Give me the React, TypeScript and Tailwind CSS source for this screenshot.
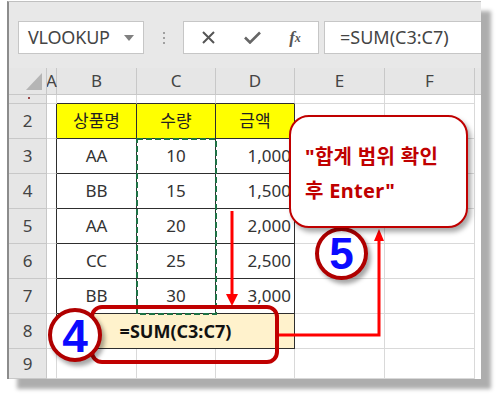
import React from 'react';

const font = "font-['Noto_Sans','Noto_Sans_CJK_KR',sans-serif]";

// widths of the sheet columns (row header, A..F, filler)
const COLS = [
  { key: 'A', w: 'w-[10px]' },
  { key: 'B', w: 'w-[80px]' },
  { key: 'C', w: 'w-[79px]' },
  { key: 'D', w: 'w-[79px]' },
  { key: 'E', w: 'w-[90px]' },
  { key: 'F', w: 'w-[90px]' },
];

const DATA = [
  ['AA', '10', '1,000'],
  ['BB', '15', '1,500'],
  ['AA', '20', '2,000'],
  ['CC', '25', '2,500'],
  ['BB', '30', '3,000'],
];

const RowHead: React.FC<{ label?: React.ReactNode; h: string }> = ({ label, h }) => (
  <div className={`w-[38px] ${h} shrink-0 bg-[#e6e6e6] border-r border-b border-[#c8c8c8] flex items-center justify-center text-[17px] text-[#444] overflow-hidden`}>
    {label}
  </div>
);

const Filler: React.FC<{ h: string }> = ({ h }) => <div className={`flex-1 ${h} bg-white`} />;

const Grid = 'border-r border-b border-[#d9d9d9]';
const Dark = 'border-r border-b border-[#2e2e2e]';

const FormulaBar = () => (
  <div className="h-[66px] bg-[#e8e8e8] flex items-start pt-[19px] pl-[9px]">
    <div className="w-[126px] h-[33px] bg-white border border-[#c6c6c6] flex items-center pl-[9px] pr-[9px] justify-between">
      <span className="text-[18px] text-[#444] tracking-[-0.2px]">VLOOKUP</span>
      <svg width="10" height="6" viewBox="0 0 10 6"><path d="M0 0h10L5 6z" fill="#808080" /></svg>
    </div>
    <div className="w-[39px] h-[33px] flex flex-col items-center justify-center gap-[3px]">
      <div className="w-[2px] h-[2px] bg-[#a0a0a0]" />
      <div className="w-[2px] h-[2px] bg-[#a0a0a0]" />
      <div className="w-[2px] h-[2px] bg-[#a0a0a0]" />
    </div>
    <div className="w-[136px] h-[33px] bg-white border border-[#c6c6c6] flex items-center">
      <div className="w-[48px] flex justify-center">
        <svg width="13" height="13" viewBox="0 0 13 13"><path d="M1 1l11 11M12 1L1 12" stroke="#555" strokeWidth="2" /></svg>
      </div>
      <div className="w-[40px] flex justify-center">
        <svg width="17" height="13" viewBox="0 0 17 13"><path d="M1 6.5l5 5L16 1.5" stroke="#666" strokeWidth="2.6" fill="none" /></svg>
      </div>
      <div className="w-[46px] flex justify-center font-['Liberation_Serif',serif] italic font-bold text-[#555] text-[17px]">
        f<span className="text-[12px] mt-[4px]">x</span>
      </div>
    </div>
    <div className="ml-[5px] flex-1 h-[33px] bg-white border border-[#c6c6c6] border-r-0 flex items-center pl-[15px]">
      <span className="text-[18px] text-[#444]">=SUM(C3:C7)</span>
    </div>
  </div>
);

const HeaderRow = () => (
  <div className="flex h-[27px]">
    <div className="w-[38px] h-[27px] bg-[#e6e6e6] border-r border-b border-[#c8c8c8] relative">
      <svg className="absolute left-[17px] top-[5px]" width="16" height="17" viewBox="0 0 16 17">
        <path d="M16 0V17H0z" fill="#b5b5b5" />
      </svg>
    </div>
    {COLS.map((c) => (
      <div key={c.key} className={`${c.w} h-[27px] shrink-0 bg-[#e6e6e6] border-r border-b border-[#c8c8c8] flex items-center justify-center text-[17px] text-[#444] overflow-visible`}>
        {c.key}
      </div>
    ))}
    <div className="flex-1 h-[27px] bg-[#e6e6e6] border-b border-[#c8c8c8]" />
  </div>
);

export default function App() {
  return (
    <div className={`relative w-[500px] h-[398px] bg-white overflow-hidden ${font}`}>
      {/* window frame */}
      <div className="ml-[7px] mt-[1px] w-[474px] border-l-2 border-t border-[#8c8c8c] border-t-[#c0c0c0] shadow-[10px_10px_4px_rgba(0,0,0,0.32)]">
        <FormulaBar />
        <HeaderRow />

        {/* row 1 */}
        <div className="flex h-[9px]">
          <div className="w-[38px] h-[9px] bg-[#e6e6e6] border-r border-b border-[#c8c8c8] relative">
            <div className="absolute left-[19px] top-[2px] w-[2px] h-[2px] bg-[#9a4a4a]" />
          </div>
          <div className={`w-[10px] h-[9px] ${Grid}`} />
          <div className={`w-[80px] h-[9px] border-r border-[#d9d9d9] border-b border-b-[#2e2e2e]`} />
          <div className={`w-[79px] h-[9px] border-r border-[#d9d9d9] border-b border-b-[#2e2e2e]`} />
          <div className={`w-[79px] h-[9px] border-r border-[#d9d9d9] border-b border-b-[#2e2e2e]`} />
          <div className={`w-[90px] h-[9px] ${Grid}`} />
          <div className={`w-[90px] h-[9px] ${Grid}`} />
          <Filler h="h-[9px]" />
        </div>

        {/* row 2 : header */}
        <div className="flex h-[35px]">
          <RowHead label="2" h="h-[35px]" />
          <div className="w-[10px] h-[35px] border-r border-r-[#2e2e2e] border-b border-b-[#d9d9d9]" />
          {['상품명', '수량', '금액'].map((t, i) => (
            <div key={t} className={`${i === 0 ? 'w-[80px]' : 'w-[79px]'} h-[35px] bg-[#ffff00] ${Dark} flex items-center justify-center text-[17px] text-[#222]`}>
              {t}
            </div>
          ))}
          <div className={`w-[90px] h-[35px] ${Grid}`} />
          <div className={`w-[90px] h-[35px] ${Grid}`} />
          <Filler h="h-[35px]" />
        </div>

        {/* rows 3-7 */}
        {DATA.map((r, idx) => (
          <div key={idx} className="flex h-[35px]">
            <RowHead label={String(idx + 3)} h="h-[35px]" />
            <div className="w-[10px] h-[35px] border-r border-r-[#2e2e2e] border-b border-b-[#d9d9d9]" />
            <div className={`w-[80px] h-[35px] ${Dark} flex items-center justify-center text-[17px] text-[#333]`}>{r[0]}</div>
            <div className={`w-[79px] h-[35px] ${Dark} flex items-center justify-center text-[17px] text-[#333]`}>{r[1]}</div>
            <div className={`w-[79px] h-[35px] ${Dark} flex items-center justify-end pr-[3px] text-[17px] text-[#333]`}>{r[2]}</div>
            <div className={`w-[90px] h-[35px] ${Grid}`} />
            <div className={`w-[90px] h-[35px] ${Grid}`} />
            <Filler h="h-[35px]" />
          </div>
        ))}

        {/* row 8 : merged total */}
        <div className="flex h-[35px]">
          <RowHead label="8" h="h-[35px]" />
          <div className="w-[10px] h-[35px] border-r border-r-[#2e2e2e] border-b border-b-[#d9d9d9]" />
          <div className={`w-[238px] h-[35px] bg-[#fff2cc] ${Dark} flex items-center justify-center text-[18px] font-bold text-[#111]`}>
            =SUM(C3:C7)
          </div>
          <div className={`w-[90px] h-[35px] ${Grid}`} />
          <div className={`w-[90px] h-[35px] ${Grid}`} />
          <Filler h="h-[35px]" />
        </div>

        {/* row 9 */}
        <div className="flex h-[30px]">
          <RowHead label="9" h="h-[30px]" />
          <div className={`w-[10px] h-[30px] ${Grid}`} />
          <div className={`w-[80px] h-[30px] ${Grid}`} />
          <div className={`w-[79px] h-[30px] ${Grid}`} />
          <div className={`w-[79px] h-[30px] ${Grid}`} />
          <div className={`w-[90px] h-[30px] ${Grid}`} />
          <div className={`w-[90px] h-[30px] ${Grid}`} />
          <Filler h="h-[30px]" />
        </div>
      </div>

      {/* annotation drawing: dashed range and arrows */}
      <svg className="absolute left-0 top-0 pointer-events-none" width="500" height="398" viewBox="0 0 500 398">
        <rect x="137" y="139" width="79" height="175" fill="none" stroke="#1e7145" strokeWidth="2" strokeDasharray="6 3" />
        <path d="M232 211V296" stroke="#ff0000" strokeWidth="3" />
        <path d="M226 294L232 306L238 294z" fill="#ff0000" />
        <path d="M279 335H379V240" stroke="#ff0000" strokeWidth="3" fill="none" />
        <path d="M374 241L379 229L384 241z" fill="#ff0000" />
      </svg>

      {/* rounded highlight round the formula */}
      <div className="absolute left-[90px] top-[305px] w-[189px] h-[59px] rounded-[12px] border-4 border-[#c00000]" />

      {/* step 4 */}
      <div className="absolute left-[48px] top-[308px] w-[54px] h-[54px] rounded-full bg-white border-4 border-[#b00000] shadow-[3px_4px_4px_rgba(0,0,0,0.35)] flex items-center justify-center">
        <span className="font-['Liberation_Sans',sans-serif] font-bold text-[46px] leading-none text-[#0a0aff] mt-[1px]">4</span>
      </div>

      {/* step 5 */}
      <div className="absolute left-[315px] top-[227px] w-[53px] h-[53px] rounded-full bg-white border-4 border-[#b00000] shadow-[3px_4px_4px_rgba(0,0,0,0.35)] flex items-center justify-center">
        <span className="font-['Liberation_Sans',sans-serif] font-bold text-[44px] leading-none text-[#0a0aff] mt-[1px]">5</span>
      </div>

      {/* callout */}
      <div className="absolute left-[289px] top-[115px] w-[179px] h-[113px] rounded-[20px] bg-white border-2 border-[#c00000] shadow-[3px_4px_5px_rgba(0,0,0,0.35)] pl-[14px] pt-[23px]">
        <p className="text-[20px] font-bold text-[#c00000] leading-[34px] tracking-[0.3px] whitespace-nowrap">"합계 범위 확인</p>
        <p className="text-[20px] font-bold text-[#c00000] leading-[34px] tracking-[0.3px] whitespace-nowrap">후 Enter"</p>
      </div>
    </div>
  );
}
